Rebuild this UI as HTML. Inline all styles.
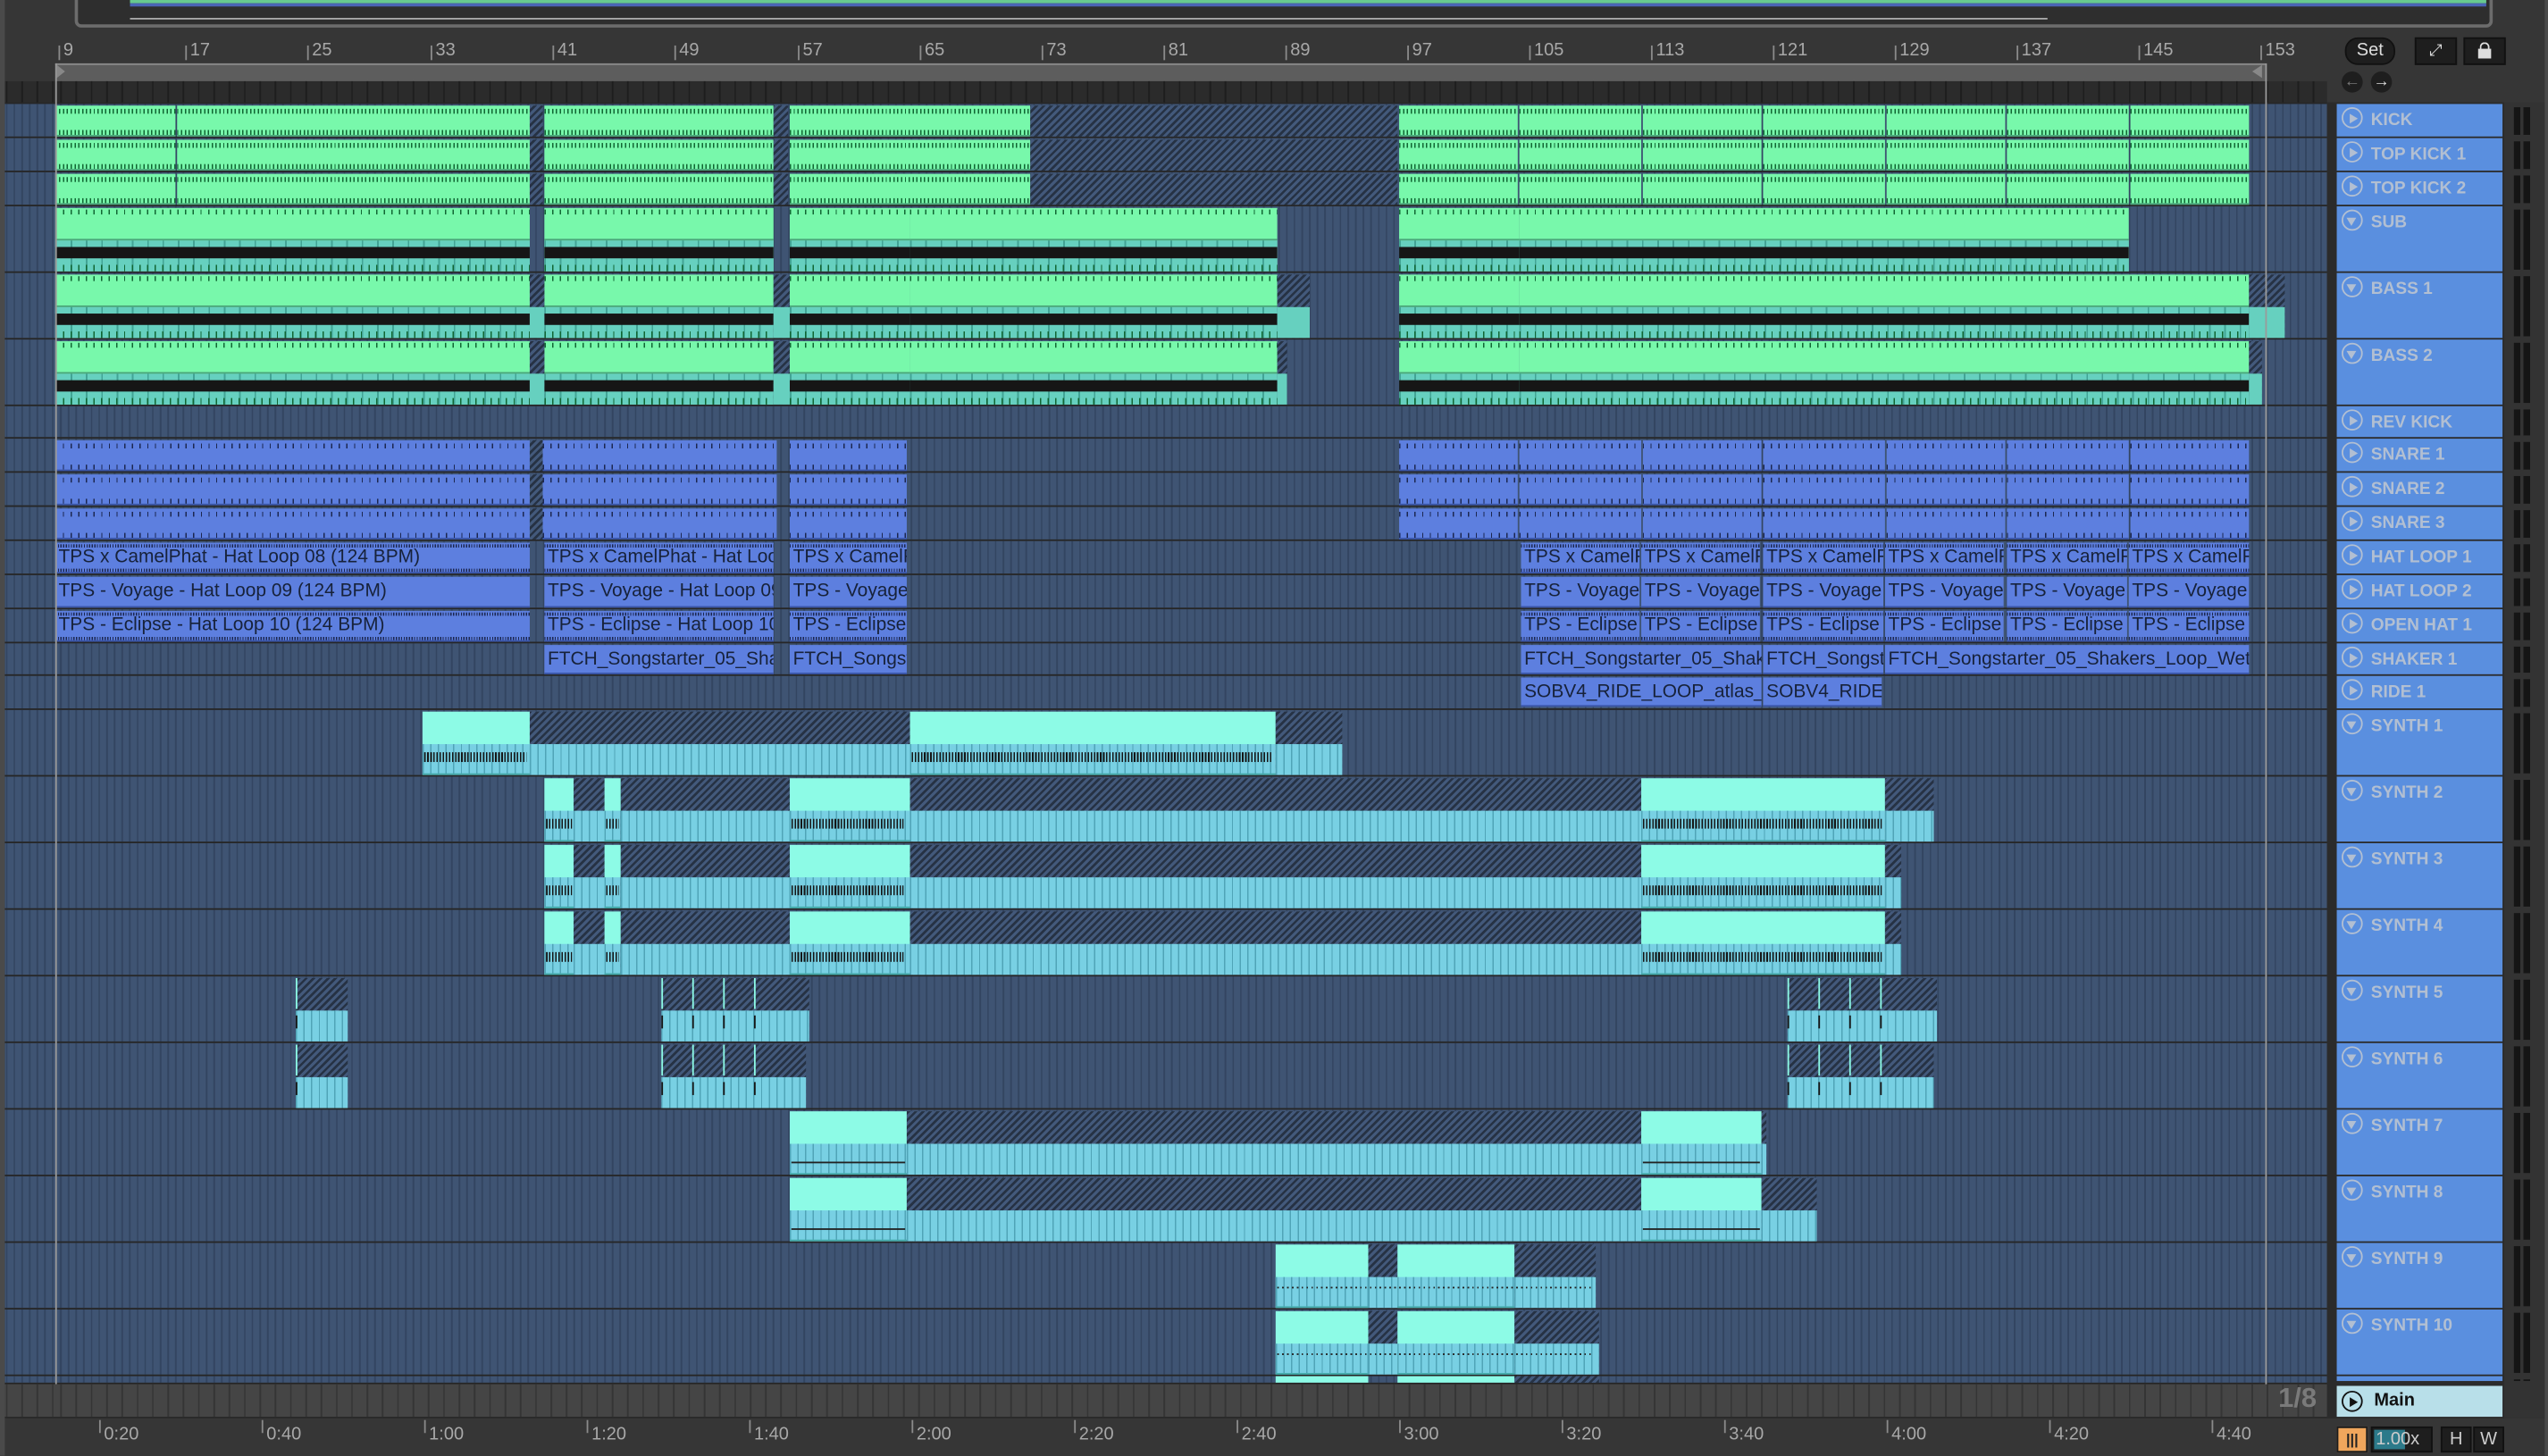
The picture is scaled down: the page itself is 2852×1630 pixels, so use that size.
<!DOCTYPE html>
<html><head><meta charset="utf-8">
<style>
html,body{margin:0;padding:0;background:#363636;overflow:hidden;width:2852px;height:1630px}
#s{position:absolute;left:0;top:0;width:1568px;height:896px;transform:scale(1.81888);transform-origin:0 0;background:#363636;font-family:"Liberation Sans",sans-serif;overflow:hidden}
.a{position:absolute}
.row{position:absolute;left:3px;width:1429px;background-color:#3f5473;background-image:repeating-linear-gradient(90deg,rgba(20,30,50,.28) 0 1px,transparent 1px 4.715px);background-position:34px 0}
.g{background:repeating-linear-gradient(90deg,#163 0 .8px,transparent .8px 2.36px) 0 2px/100% 3px no-repeat,repeating-linear-gradient(90deg,#163 0 .8px,transparent .8px 2.36px) 0 15px/100% 3px no-repeat,#78f8ab;box-shadow:inset 0 -1px #4aa57a}
.gb{background:repeating-linear-gradient(90deg,#163 0 .8px,transparent .8px 4.7px) 0 1px/100% 3px no-repeat,linear-gradient(#4aa57a,#4aa57a) 0 19px/100% 1px no-repeat,linear-gradient(#161616,#161616) 0 24px/100% 7px no-repeat,repeating-linear-gradient(90deg,#163 0 .8px,transparent .8px 4.7px) 0 35px/100% 4px no-repeat,repeating-linear-gradient(90deg,rgba(0,80,70,.35) 0 1px,transparent 1px 9.43px) 0 20px/100% 20px no-repeat,linear-gradient(#66d0bf,#66d0bf) 0 20px/100% 20px no-repeat,#78f8ab}
.hb{background:linear-gradient(#66d0bf,#66d0bf) 0 20px/100% 20px no-repeat,repeating-linear-gradient(-45deg,#263244 0 1.5px,#43597b 1.5px 3.2px)}
.h{background:repeating-linear-gradient(-45deg,#263244 0 1.5px,#43597b 1.5px 3.2px)}
.bl{background:repeating-linear-gradient(90deg,#1c2750 0 .7px,transparent .7px 4.715px) 0 2px/100% 3px no-repeat,repeating-linear-gradient(90deg,#1c2750 0 .7px,transparent .7px 4.715px) 0 15px/100% 3px no-repeat,#5d7fdf;box-shadow:inset 0 -1px #3a55a8}
.tx{background:#5d7fdf;font-family:"Liberation Sans Narrow","Liberation Sans",sans-serif;font-size:11.5px;line-height:18px;color:#17223a;white-space:nowrap;overflow:hidden;padding-left:2px;box-sizing:border-box;box-shadow:inset 0 -1px #3a55a8}
.tk{background-image:repeating-linear-gradient(90deg,#1c2750 0 .7px,transparent .7px 1.6px),repeating-linear-gradient(90deg,#1c2750 0 .7px,transparent .7px 1.6px);background-size:100% 2px,100% 2px;background-position:0 1px,0 16px;background-repeat:no-repeat}
.sm{background:repeating-linear-gradient(90deg,rgba(30,110,130,.45) 0 .8px,transparent .8px 4.715px) 0 20px/100% 20px no-repeat,linear-gradient(#78d0e3,#78d0e3) 0 20px/100% 20px no-repeat,#8dfbe6;box-shadow:inset 0 -21px 0 -20px #4aa}
.sh{background:repeating-linear-gradient(90deg,rgba(30,110,130,.45) 0 .8px,transparent .8px 4.715px) 0 20px/100% 20px no-repeat,linear-gradient(#78d0e3,#78d0e3) 0 20px/100% 20px no-repeat,repeating-linear-gradient(-45deg,#263244 0 1.5px,#43597b 1.5px 3.2px)}
.nt{background:repeating-linear-gradient(90deg,#151515 0 .9px,transparent .9px 1.9px)}
.hd{position:absolute;left:1438px;width:102px;background:#5a8fdf;color:#b2bfd2;font-weight:bold;font-size:10.5px}
.hd span{position:absolute;left:21px;top:4px}
.ic{position:absolute;left:3px;top:2px;width:13px;height:13px;border:1.3px solid #b2bfd2;border-radius:50%;box-sizing:border-box}
.ic.p:after{content:"";position:absolute;left:3.5px;top:2.5px;border-left:5px solid #b2bfd2;border-top:3px solid transparent;border-bottom:3px solid transparent}
.ic.d:after{content:"";position:absolute;left:2px;top:3.5px;border-top:5px solid #b2bfd2;border-left:3px solid transparent;border-right:3px solid transparent}
.mt{position:absolute;left:1547px;width:10px;background:linear-gradient(90deg,#151515 0 4px,transparent 4px 6px,#151515 6px 10px)}
.rn{position:absolute;top:25px;font-size:11px;color:#a8a8a8}
.rn:before{content:"";position:absolute;left:-3px;top:3px;width:1px;height:9px;background:#8a8a8a}
.bt{position:absolute;top:877px;font-size:11px;color:#a8a8a8}
.bt:before{content:"";position:absolute;left:-3px;top:-3px;width:1px;height:8px;background:#8a8a8a}
</style></head><body>
<div id="s">
<div class="a" style="left:0;top:0;width:3px;height:896px;background:#4a4a4a"></div>
<div class="a" style="left:46px;top:-6px;width:1484px;height:19px;border:2px solid #6c6c6c;border-radius:4px;background:#2e2e2e"></div>
<div class="a" style="left:80px;top:0;width:1450px;height:2px;background:#67c98f"></div>
<div class="a" style="left:80px;top:2px;width:1450px;height:2px;background:#4a64b5"></div>
<div class="a" style="left:80px;top:11px;width:1180px;height:1px;background:#aaa"></div>
<div class="rn" style="left:39px">9</div><div class="rn" style="left:117px">17</div><div class="rn" style="left:192px">25</div><div class="rn" style="left:268px">33</div><div class="rn" style="left:343px">41</div><div class="rn" style="left:418px">49</div><div class="rn" style="left:494px">57</div><div class="rn" style="left:569px">65</div><div class="rn" style="left:644px">73</div><div class="rn" style="left:719px">81</div><div class="rn" style="left:794px">89</div><div class="rn" style="left:869px">97</div><div class="rn" style="left:944px">105</div><div class="rn" style="left:1019px">113</div><div class="rn" style="left:1094px">121</div><div class="rn" style="left:1169px">129</div><div class="rn" style="left:1244px">137</div><div class="rn" style="left:1319px">145</div><div class="rn" style="left:1394px">153</div>
<div class="a" style="left:34px;top:39px;width:1360px;height:10px;background:#5d5d5d;border-top:1px solid #8a8a8a"></div>
<div class="a" style="left:35px;top:40px;width:0;height:0;border-left:5px solid #888;border-top:4px solid transparent;border-bottom:4px solid transparent"></div>
<div class="a" style="left:1386px;top:40px;width:0;height:0;border-right:6px solid #888;border-top:4px solid transparent;border-bottom:4px solid transparent"></div>
<div class="a" style="left:3px;top:50px;width:1429px;height:13px;background:#2b2b2b repeating-linear-gradient(90deg,#1e1e1e 0 1px,transparent 1px 9.43px) 34px 0"></div>
<div class="a" style="left:3px;top:63px;width:1429px;height:789px;background:#262626"></div>
<div id="rows"></div>
<div class="a tx tk" style="left:34px;top:334px;width:292px;height:19px">TPS x CamelPhat - Hat Loop 08 (124 BPM)</div>
<div class="a tx tk" style="left:335px;top:334px;width:141px;height:19px">TPS x CamelPhat - Hat Loop 08</div>
<div class="a tx tk" style="left:486px;top:334px;width:72px;height:19px">TPS x CamelPhat</div>
<div class="a tx tk" style="left:936px;top:334px;width:73px;height:19px">TPS x CamelPhat</div>
<div class="a tx tk" style="left:1010px;top:334px;width:73px;height:19px">TPS x CamelPhat</div>
<div class="a tx tk" style="left:1085px;top:334px;width:74px;height:19px">TPS x CamelPhat</div>
<div class="a tx tk" style="left:1160px;top:334px;width:73px;height:19px">TPS x CamelPhat</div>
<div class="a tx tk" style="left:1235px;top:334px;width:74px;height:19px">TPS x CamelPhat</div>
<div class="a tx tk" style="left:1310px;top:334px;width:74px;height:19px">TPS x CamelPhat</div>
<div class="a tx" style="left:34px;top:355px;width:292px;height:19px">TPS - Voyage - Hat Loop 09 (124 BPM)</div>
<div class="a tx" style="left:335px;top:355px;width:141px;height:19px">TPS - Voyage - Hat Loop 09</div>
<div class="a tx" style="left:486px;top:355px;width:72px;height:19px">TPS - Voyage - Hat</div>
<div class="a tx" style="left:936px;top:355px;width:73px;height:19px">TPS - Voyage - Hat</div>
<div class="a tx" style="left:1010px;top:355px;width:73px;height:19px">TPS - Voyage - Hat</div>
<div class="a tx" style="left:1085px;top:355px;width:74px;height:19px">TPS - Voyage - Hat</div>
<div class="a tx" style="left:1160px;top:355px;width:73px;height:19px">TPS - Voyage - Hat</div>
<div class="a tx" style="left:1235px;top:355px;width:74px;height:19px">TPS - Voyage - Hat</div>
<div class="a tx" style="left:1310px;top:355px;width:74px;height:19px">TPS - Voyage - Hat</div>
<div class="a tx tk" style="left:34px;top:376px;width:292px;height:19px">TPS - Eclipse - Hat Loop 10 (124 BPM)</div>
<div class="a tx tk" style="left:335px;top:376px;width:141px;height:19px">TPS - Eclipse - Hat Loop 10</div>
<div class="a tx tk" style="left:486px;top:376px;width:72px;height:19px">TPS - Eclipse - Hat</div>
<div class="a tx tk" style="left:936px;top:376px;width:73px;height:19px">TPS - Eclipse - Hat</div>
<div class="a tx tk" style="left:1010px;top:376px;width:73px;height:19px">TPS - Eclipse - Hat</div>
<div class="a tx tk" style="left:1085px;top:376px;width:74px;height:19px">TPS - Eclipse - Hat</div>
<div class="a tx tk" style="left:1160px;top:376px;width:73px;height:19px">TPS - Eclipse - Hat</div>
<div class="a tx tk" style="left:1235px;top:376px;width:74px;height:19px">TPS - Eclipse - Hat</div>
<div class="a tx tk" style="left:1310px;top:376px;width:74px;height:19px">TPS - Eclipse - Hat</div>
<div class="a tx" style="left:335px;top:397px;width:141px;height:18px">FTCH_Songstarter_05_Shakers</div>
<div class="a tx" style="left:486px;top:397px;width:72px;height:18px">FTCH_Songstarter</div>
<div class="a tx" style="left:936px;top:397px;width:148px;height:18px">FTCH_Songstarter_05_Shakers</div>
<div class="a tx" style="left:1085px;top:397px;width:74px;height:18px">FTCH_Songstarter</div>
<div class="a tx" style="left:1160px;top:397px;width:224px;height:18px">FTCH_Songstarter_05_Shakers_Loop_Wet</div>
<div class="a tx" style="left:936px;top:417px;width:148px;height:18px">SOBV4_RIDE_LOOP_atlas_1</div>
<div class="a tx" style="left:1085px;top:417px;width:73px;height:18px">SOBV4_RIDE_LOOP</div>
<div class="a" style="left:34px;top:39px;width:1px;height:813px;background:#9a9a9a"></div>
<div class="a" style="left:1394px;top:39px;width:1px;height:833px;background:#9a9a9a"></div>
<div class="a" style="left:3px;top:852px;width:1429px;height:20px;background:#454545 repeating-linear-gradient(90deg,#353535 0 1px,transparent 1px 9.43px) 34px 0"></div>
<div class="a" style="left:1402px;top:851px;font-size:17px;font-weight:bold;color:#7a7a7a">1/8</div>
<div class="a" style="left:3px;top:872px;width:1429px;height:1px;background:#2a2a2a"></div>
<div class="bt" style="left:64px">0:20</div><div class="bt" style="left:164px">0:40</div><div class="bt" style="left:264px">1:00</div><div class="bt" style="left:364px">1:20</div><div class="bt" style="left:464px">1:40</div><div class="bt" style="left:564px">2:00</div><div class="bt" style="left:664px">2:20</div><div class="bt" style="left:764px">2:40</div><div class="bt" style="left:864px">3:00</div><div class="bt" style="left:964px">3:20</div><div class="bt" style="left:1064px">3:40</div><div class="bt" style="left:1164px">4:00</div><div class="bt" style="left:1264px">4:20</div><div class="bt" style="left:1364px">4:40</div>
<div class="a" style="left:1432px;top:63px;width:136px;height:810px;background:#2b2b2b"></div>
<div class="a" style="left:1541px;top:63px;width:25px;height:810px;background:#333"></div>
<div class="a" style="left:1566px;top:0;width:2px;height:896px;background:#4a4a4a"></div>
<div class="a" style="left:1443px;top:23px;width:29px;height:15px;border-radius:8px;background:#1e1e1e;border:1px solid #111;color:#ddd;font-size:11px;text-align:center;line-height:15px">Set</div>
<div class="a" style="left:1486px;top:23px;width:24px;height:15px;background:#1e1e1e;border:1px solid #111;color:#ddd;font-size:10px;text-align:center;line-height:15px">⤢</div>
<div class="a" style="left:1516px;top:23px;width:24px;height:15px;background:#1e1e1e;border:1px solid #111"><div class="a" style="left:8px;top:6px;width:8px;height:6px;background:#ddd"></div><div class="a" style="left:9px;top:2px;width:4px;height:4px;border:1px solid #ddd;border-bottom:none;border-radius:3px 3px 0 0"></div></div>
<div class="a" style="left:1441px;top:44px;width:13px;height:13px;border-radius:50%;background:#1e1e1e;color:#777;font-size:10px;text-align:center;line-height:13px">←</div>
<div class="a" style="left:1459px;top:44px;width:13px;height:13px;border-radius:50%;background:#1e1e1e;color:#ddd;font-size:10px;text-align:center;line-height:13px">→</div>
<div class="hd" style="top:64px;height:20px"><i class="ic p"></i><span>KICK</span></div>
<div class="hd" style="top:85px;height:20px"><i class="ic p"></i><span>TOP KICK 1</span></div>
<div class="hd" style="top:106px;height:20px"><i class="ic p"></i><span>TOP KICK 2</span></div>
<div class="hd" style="top:127px;height:40px"><i class="ic d"></i><span>SUB</span></div>
<div class="hd" style="top:168px;height:40px"><i class="ic d"></i><span>BASS 1</span></div>
<div class="hd" style="top:209px;height:40px"><i class="ic d"></i><span>BASS 2</span></div>
<div class="hd" style="top:250px;height:19px"><i class="ic p"></i><span>REV KICK</span></div>
<div class="hd" style="top:270px;height:20px"><i class="ic p"></i><span>SNARE 1</span></div>
<div class="hd" style="top:291px;height:20px"><i class="ic p"></i><span>SNARE 2</span></div>
<div class="hd" style="top:312px;height:20px"><i class="ic p"></i><span>SNARE 3</span></div>
<div class="hd" style="top:333px;height:20px"><i class="ic p"></i><span>HAT LOOP 1</span></div>
<div class="hd" style="top:354px;height:20px"><i class="ic p"></i><span>HAT LOOP 2</span></div>
<div class="hd" style="top:375px;height:20px"><i class="ic p"></i><span>OPEN HAT 1</span></div>
<div class="hd" style="top:396px;height:19px"><i class="ic p"></i><span>SHAKER 1</span></div>
<div class="hd" style="top:416px;height:20px"><i class="ic p"></i><span>RIDE 1</span></div>
<div class="hd" style="top:437px;height:40px"><i class="ic d"></i><span>SYNTH 1</span></div>
<div class="hd" style="top:478px;height:40px"><i class="ic d"></i><span>SYNTH 2</span></div>
<div class="hd" style="top:519px;height:40px"><i class="ic d"></i><span>SYNTH 3</span></div>
<div class="hd" style="top:560px;height:40px"><i class="ic d"></i><span>SYNTH 4</span></div>
<div class="hd" style="top:601px;height:40px"><i class="ic d"></i><span>SYNTH 5</span></div>
<div class="hd" style="top:642px;height:40px"><i class="ic d"></i><span>SYNTH 6</span></div>
<div class="hd" style="top:683px;height:40px"><i class="ic d"></i><span>SYNTH 7</span></div>
<div class="hd" style="top:724px;height:40px"><i class="ic d"></i><span>SYNTH 8</span></div>
<div class="hd" style="top:765px;height:40px"><i class="ic d"></i><span>SYNTH 9</span></div>
<div class="hd" style="top:806px;height:40px"><i class="ic d"></i><span>SYNTH 10</span></div>
<div class="hd" style="top:847px;height:3px"></div>
<div class="hd" style="top:853px;height:19px;background:#b8dfe9;color:#111;font-size:11px"><i class="ic p mn" style="border-color:#111;top:3px"></i><span style="left:23px;top:3px">Main</span></div>
<style>.hd .ic.mn:after{border-left-color:#111}</style>
<div class="a" style="left:1438px;top:878px;width:17px;height:14px;background:#f0a65c;border:1px solid #1c1c1c;font-size:9px;color:#222;text-align:center;line-height:14px;font-weight:bold">|||</div>
<div class="a" style="left:1459px;top:878px;width:36px;height:14px;background:#1e1e1e;border:1px solid #111"><div class="a" style="left:1px;top:1px;width:19px;height:12px;background:#2c7a8a"></div><div class="a" style="left:2px;top:0;font-size:11px;color:#ccc;line-height:14px">1.00x</div></div>
<div class="a" style="left:1502px;top:878px;width:17px;height:14px;background:#1e1e1e;border:1px solid #111;color:#ccc;font-size:11px;text-align:center;line-height:14px">H</div>
<div class="a" style="left:1522px;top:878px;width:17px;height:14px;background:#1e1e1e;border:1px solid #111;color:#ccc;font-size:11px;text-align:center;line-height:14px">W</div>
</div>
<script>
var S=document.getElementById('s'),R=document.getElementById('rows');
function d(p,c,x1,x2,y,h,st){var e=document.createElement('div');e.className='a '+c;e.style.cssText='left:'+x1+'px;width:'+(x2-x1)+'px;top:'+y+'px;height:'+h+'px;'+(st||'');p.appendChild(e);return e;}
var rows=[[64,20],[85,20],[106,20],[127,40],[168,40],[209,40],[250,19],[270,20],[291,20],[312,20],[333,20],[354,20],[375,20],[396,19],[416,20]];
for(var n=0;n<10;n++)rows.push([437+41*n,40]);rows.push([847,4]);
rows.forEach(function(r){d(R,'row',3,1432,r[0],r[1]);});
rows.forEach(function(r){d(S,'mt',1547,1557,r[0]+2,Math.max(1,r[1]-3));});
[64,85,106].forEach(function(y){
[[34,108],[109,326],[335,476],[486,634],[861,934],[935,1010],[1011,1084],[1085,1160],[1161,1234],[1235,1310],[1311,1384]].forEach(function(s){d(R,'g',s[0],s[1],y+1,19);});
[[326,334],[476,485],[634,860]].forEach(function(s){d(R,'h',s[0],s[1],y+1,19);});
});
[[34,326],[335,476],[486,560],[560,786],[861,935],[935,1310]].forEach(function(s){d(R,'gb',s[0],s[1],128,39);});
[[168,806,1406],[209,792,1392]].forEach(function(b){var y=b[0]+1;
[[34,326],[335,476],[486,560],[560,786],[861,935],[935,1384]].forEach(function(s){d(R,'gb',s[0],s[1],y,39);});
[[326,335],[476,486],[786,b[1]],[1384,b[2]]].forEach(function(s){d(R,'hb',s[0],s[1],y,39);});
});
[270,291,312].forEach(function(y){
[[34,326],[334,478],[486,558],[861,934],[935,1010],[1011,1084],[1085,1160],[1161,1234],[1235,1310],[1311,1384]].forEach(function(s){d(R,'bl',s[0],s[1],y+1,19);});
d(R,'h',326,334,y+1,19);
});
function sy(y,list){list.forEach(function(s){d(R,s[0],s[1],s[2],y+1,39);});}
function nt(y,x1,x2){d(R,'nt',x1,x2,y+26,6);}
sy(437,[['sm',260,326],['sh',326,560],['sm',560,785],['sh',785,826]]);nt(437,261,324);nt(437,561,783);
[[478,1190],[519,1170],[560,1170]].forEach(function(a){var y=a[0];
sy(y,[['sm',335,353],['sh',353,372],['sm',372,382],['sh',382,486],['sm',486,560],['sh',560,1010],['sm',1010,1160],['sh',1160,a[1]]]);
nt(y,336,352);nt(y,373,381);nt(y,487,556);nt(y,1011,1158);});
[[601,498,1192],[642,496,1190]].forEach(function(a){var y=a[0];
sy(y,[['sh',182,214],['sh',407,a[1]],['sh',1100,a[2]]]);
[182,407,426,445,464,1100,1119,1138,1157].forEach(function(x){d(R,'',x,x+1,y+1,19,'background:#8dfbe6');d(R,'',x,x+1,y+24,8,'background:#151515');});});
sy(683,[['sm',486,558],['sh',558,1010],['sm',1010,1084],['sh',1084,1087]]);
sy(724,[['sm',486,558],['sh',558,1010],['sm',1010,1084],['sh',1084,1118]]);
[683,724].forEach(function(y){d(R,'',487,557,y+32,1,'background:#222');d(R,'',1011,1083,y+32,1,'background:#222');});
sy(765,[['sm',785,842],['sh',842,860],['sm',860,932],['sh',932,982]]);
sy(806,[['sm',785,842],['sh',842,860],['sm',860,932],['sh',932,984]]);
[765,806].forEach(function(y){d(R,'',786,980,y+27,1,'background:repeating-linear-gradient(90deg,#222 0 1px,transparent 1px 3px)');});
d(R,'',785,842,847,4,'background:#8dfbe6');d(R,'',860,932,847,4,'background:#8dfbe6');d(R,'h',932,984,847,4);
</script>
</body></html>
